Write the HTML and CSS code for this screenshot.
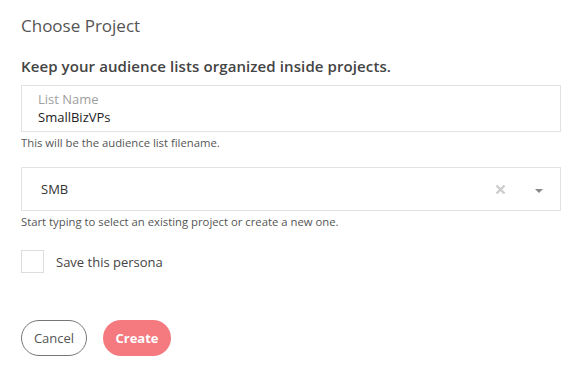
FILE: index.html
```html
<!DOCTYPE html>
<html>
	<head>
		<title>Choose Project</title>
		<meta name="viewport" content="width=device-width, initial-scale=1.0">
		<link rel="stylesheet" href="styles.css">
	</head>
	<body>
		<div class="dialog">
			<h2 class="title">Choose Project</h2>
			<p class="lead">Keep your audience lists organized inside projects.</p>

			<div class="field">
				<label class="field-label">List Name</label>
				<div class="field-value">SmallBizVPs</div>
			</div>
			<p class="hint">This will be the audience list filename.</p>

			<div class="select">
				<span class="select-value">SMB</span>
				<svg class="select-clear" width="11" height="11" viewBox="0 0 11 11">
					<path d="M1.5 1.5 L9.5 9.5 M9.5 1.5 L1.5 9.5" stroke="#cccccc" stroke-width="2.4" stroke-linecap="butt"/>
				</svg>
				<span class="select-arrow"></span>
			</div>
			<p class="hint">Start typing to select an existing project or create a new one.</p>

			<label class="check">
				<span class="check-box"></span>
				<span class="check-text">Save this persona</span>
			</label>

			<div class="actions">
				<button class="btn btn-cancel">Cancel</button>
				<button class="btn btn-create">Create</button>
			</div>
		</div>
	</body>
</html>
```

FILE: styles.css
```css
body {
	font-family: 'Open Sans', 'Noto Sans', sans-serif;
	margin: 0px;
	background: #ffffff;
	color: #444444;
}
.dialog {
	width: 540px;
	padding: 14px 27px 0 21px;
}
.title {
	font-size: 17px;
	font-weight: normal;
	color: #555555;
	margin: 0px;
	line-height: 24px;
}
.lead {
	font-size: 15px;
	font-weight: 600;
	color: #444444;
	margin: 17px 0 0 0;
	line-height: 22px;
	letter-spacing: 0.1px;
}

.field {
	margin-top: 8px;
	height: 45px;
	border: 1px solid #e2e2e2;
	padding: 0 16px;
	display: flex;
	flex-direction: column;
	justify-content: center;
}
.field-label {
	font-size: 13px;
	color: #a0a0a0;
	line-height: 17px;
}
.field-value {
	font-size: 13px;
	color: #222222;
	line-height: 18px;
}
.hint {
	font-size: 11.3px;
	color: #555555;
	margin: 3px 0 0 0;
	line-height: 16px;
}

.select {
	margin-top: 16px;
	height: 42px;
	border: 1px solid #e2e2e2;
	display: flex;
	align-items: center;
	padding: 0 17px 0 19px;
}
.select-value {
	flex: 1;
	font-size: 13px;
	color: #333333;
}
.select-clear {
	margin-right: 29px;
	margin-top: 1px;
}
.select-arrow {
	width: 0;
	height: 0;
	border-left: 4px solid transparent;
	border-right: 4px solid transparent;
	border-top: 4px solid #888888;
	margin-top: 3px;
}

.check {
	display: flex;
	align-items: center;
	margin-top: 20px;
}
.check-box {
	width: 21px;
	height: 21px;
	border: 1px solid #dddddd;
}
.check-text {
	font-size: 13px;
	color: #444444;
	margin-left: 12px;
}

.actions {
	display: flex;
	gap: 16px;
	margin-top: 47px;
}
.btn {
	font-family: 'Open Sans', 'Noto Sans', sans-serif;
	font-size: 13px;
	height: 36px;
	border-radius: 18px;
	padding: 0;
	cursor: pointer;
}
.btn-cancel {
	width: 66px;
	background: #ffffff;
	border: 1px solid #777777;
	color: #555555;
}
.btn-create {
	width: 68px;
	background: #f47a80;
	border: none;
	color: #ffffff;
	font-weight: bold;
}
```
